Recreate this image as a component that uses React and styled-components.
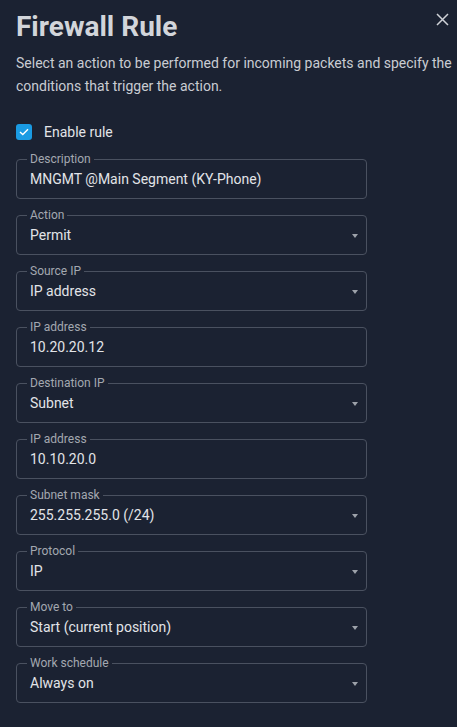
import React from 'react';
import styled, { createGlobalStyle } from 'styled-components';

const GlobalStyle = createGlobalStyle`
  html, body {
    margin: 0;
    padding: 0;
    background: #1b2232;
  }
  body {
    font-family: Roboto, "Liberation Sans", sans-serif;
    color: #e2e4e8;
  }
`;

const Panel = styled.div`
  width: 457px;
  min-height: 727px;
  box-sizing: border-box;
  padding: 9px 16px 20px 16px;
  background: #1b2232;
  position: relative;
`;

const Header = styled.div`
  display: flex;
  align-items: flex-start;
  justify-content: space-between;
`;

const Title = styled.h1`
  margin: 0;
  font-size: 28px;
  line-height: 36px;
  font-weight: 700;
  color: #d2d5da;
`;

const CloseButton = styled.button`
  position: absolute;
  top: 11px;
  right: 7px;
  width: 16px;
  height: 16px;
  padding: 0;
  border: none;
  background: none;
  cursor: pointer;
  display: flex;
  align-items: center;
  justify-content: center;
`;

const Intro = styled.p`
  margin: 7px -14px 0 0;
  font-size: 14px;
  line-height: 23px;
  color: #c9ccd2;
`;

const CheckRow = styled.label`
  display: flex;
  align-items: center;
  gap: 12px;
  margin-top: 26px;
  font-size: 14px;
  color: #e2e4e8;
  height: 16px;
`;

const Box = styled.span`
  width: 16px;
  height: 16px;
  border-radius: 3px;
  background: #1a9be3;
  display: flex;
  align-items: center;
  justify-content: center;
`;

const Fields = styled.div`
  display: flex;
  flex-direction: column;
  gap: 9px;
  margin-top: 12px;
`;

const Fieldset = styled.fieldset`
  width: 351px;
  box-sizing: border-box;
  margin: 0;
  padding: 3px 8px 9px 13px;
  border: 1px solid #4a5160;
  border-radius: 4px;
  min-width: 0;
`;

const Legend = styled.legend`
  margin-left: -3px;
  padding: 0 3px;
  font-size: 12px;
  line-height: 14px;
  color: #a3a8b0;
`;

const Row = styled.div`
  display: flex;
  align-items: center;
  justify-content: space-between;
  height: 20px;
`;

const Value = styled.span`
  font-size: 14px;
  line-height: 20px;
  color: #e2e4e8;
  white-space: nowrap;
`;

const Arrow = styled.span`
  width: 0;
  height: 0;
  border-left: 3.5px solid transparent;
  border-right: 3.5px solid transparent;
  border-top: 4px solid #9da2aa;
  margin-top: 1px;
`;

const fields = [
  { label: 'Description', value: 'MNGMT @Main Segment (KY-Phone)' },
  { label: 'Action', value: 'Permit', select: true },
  { label: 'Source IP', value: 'IP address', select: true },
  { label: 'IP address', value: '10.20.20.12' },
  { label: 'Destination IP', value: 'Subnet', select: true },
  { label: 'IP address', value: '10.10.20.0' },
  { label: 'Subnet mask', value: '255.255.255.0 (/24)', select: true },
  { label: 'Protocol', value: 'IP', select: true },
  { label: 'Move to', value: 'Start (current position)', select: true },
  { label: 'Work schedule', value: 'Always on', select: true },
];

export default function App() {
  return (
    <>
      <GlobalStyle />
      <Panel>
        <Header>
          <Title>Firewall Rule</Title>
          <CloseButton aria-label="Close">
            <svg width="13" height="13" viewBox="0 0 13 13">
              <path d="M1 1 L12 12 M12 1 L1 12" stroke="#cfd2d7" strokeWidth="1.5" />
            </svg>
          </CloseButton>
        </Header>
        <Intro>
          Select an action to be performed for incoming packets and specify the conditions that
          trigger the action.
        </Intro>
        <CheckRow>
          <Box>
            <svg width="10" height="8" viewBox="0 0 10 8">
              <path d="M1 4 L3.8 6.6 L9 1.2" fill="none" stroke="#ffffff" strokeWidth="1.4" />
            </svg>
          </Box>
          Enable rule
        </CheckRow>
        <Fields>
          {fields.map((f, i) => (
            <Fieldset key={i}>
              <Legend>{f.label}</Legend>
              <Row>
                <Value>{f.value}</Value>
                {f.select && <Arrow />}
              </Row>
            </Fieldset>
          ))}
        </Fields>
      </Panel>
    </>
  );
}
